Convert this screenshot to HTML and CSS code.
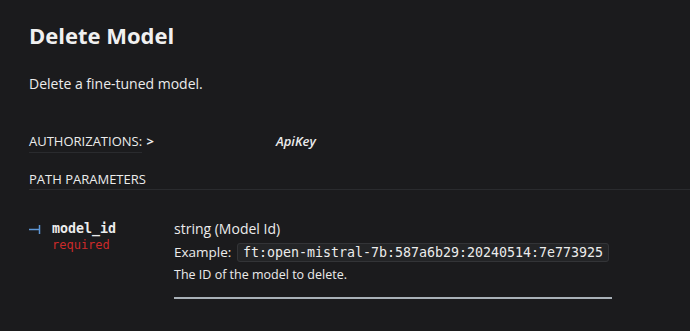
FILE: index.html
```html
<!DOCTYPE html>
<html>
<head>
<meta charset="utf-8">
<link rel="stylesheet" href="styles.css">
</head>
<body>
<main class="page">
  <h1 class="title">Delete Model</h1>
  <p class="desc">Delete a fine-tuned model.</p>
  <div class="auth">
    <span class="auth-label"><span class="auth-text">AUTHORIZATIONS:</span> <span class="chev">&gt;</span></span>
    <span class="auth-value">ApiKey</span>
  </div>
  <div class="section-head">PATH PARAMETERS</div>
  <div class="param">
    <div class="param-name">
      <div class="name-line">
        <svg class="tick" width="12" height="10" viewBox="0 0 12 10"><path d="M0 5.5H10" stroke="#5e97d6" stroke-width="1.5"/><path d="M10.5 1V10" stroke="#5e97d6" stroke-width="1.5"/></svg>
        <span class="name">model_id</span>
      </div>
      <div class="req">required</div>
    </div>
    <div class="param-detail">
      <div class="type">string (Model Id)</div>
      <div class="example">Example: <code class="code">ft:open-mistral-7b:587a6b29:20240514:7e773925</code></div>
      <div class="pdesc">The ID of the model to delete.</div>
      <div class="rule"></div>
    </div>
  </div>
</main>
</body>
</html>
```

FILE: styles.css
```css
html, body {
  margin: 0;
  padding: 0;
  background: #1b1b1d;
  color: #ececec;
  font-family: "Open Sans", "Noto Sans", sans-serif;
}
.page {
  padding: 20px 0 0 29px;
}
.title {
  margin: 0;
  font-size: 22px;
  font-weight: 700;
  line-height: 30px;
  color: #f0f0f0;
}
.desc {
  margin: 24px 0 0 0;
  font-size: 14px;
  line-height: 20px;
}
.auth {
  margin-top: 38px;
  display: flex;
  align-items: center;
  font-size: 13px;
  line-height: 18px;
}
.auth-label {
  width: 247px;
  display: inline-block;
}
.auth-text {
  border-bottom: 1px solid #2a2b2e;
  padding-bottom: 2px;
}
.chev {
  font-weight: 700;
  margin-left: 1px;
}
.auth-value {
  font-style: italic;
  font-weight: 600;
  font-size: 13px;
}
.section-head {
  margin-top: 20px;
  font-size: 13px;
  line-height: 19px;
  padding-bottom: 0;
  border-bottom: 1px solid #2a2b2e;
}
.param {
  display: flex;
  margin-top: 30px;
}
.param-name {
  width: 145px;
}
.name-line {
  display: flex;
  align-items: center;
  gap: 11px;
}
.tick {
  flex: none;
}
.name {
  font-family: "DejaVu Sans Mono", monospace;
  font-weight: 700;
  font-size: 13.3px;
  line-height: 18px;
}
.req {
  margin-left: 23px;
  font-family: "DejaVu Sans Mono", monospace;
  font-size: 12px;
  line-height: 14px;
  color: #cc2a2a;
}
.param-detail {
  width: 438px;
}
.type {
  font-size: 14px;
  line-height: 18px;
}
.example {
  margin-top: 3px;
  font-size: 13.5px;
  line-height: 22px;
}
.code {
  font-family: "DejaVu Sans Mono", monospace;
  font-size: 13.3px;
  background: #232426;
  border: 1px solid #333437;
  border-radius: 3px;
  padding: 1px 5px;
  margin-left: 2px;
}
.pdesc {
  margin-top: 1px;
  font-size: 12.5px;
  line-height: 20px;
}
.rule {
  margin-top: 12px;
  height: 2px;
  background: #a9b1b8;
}
```
